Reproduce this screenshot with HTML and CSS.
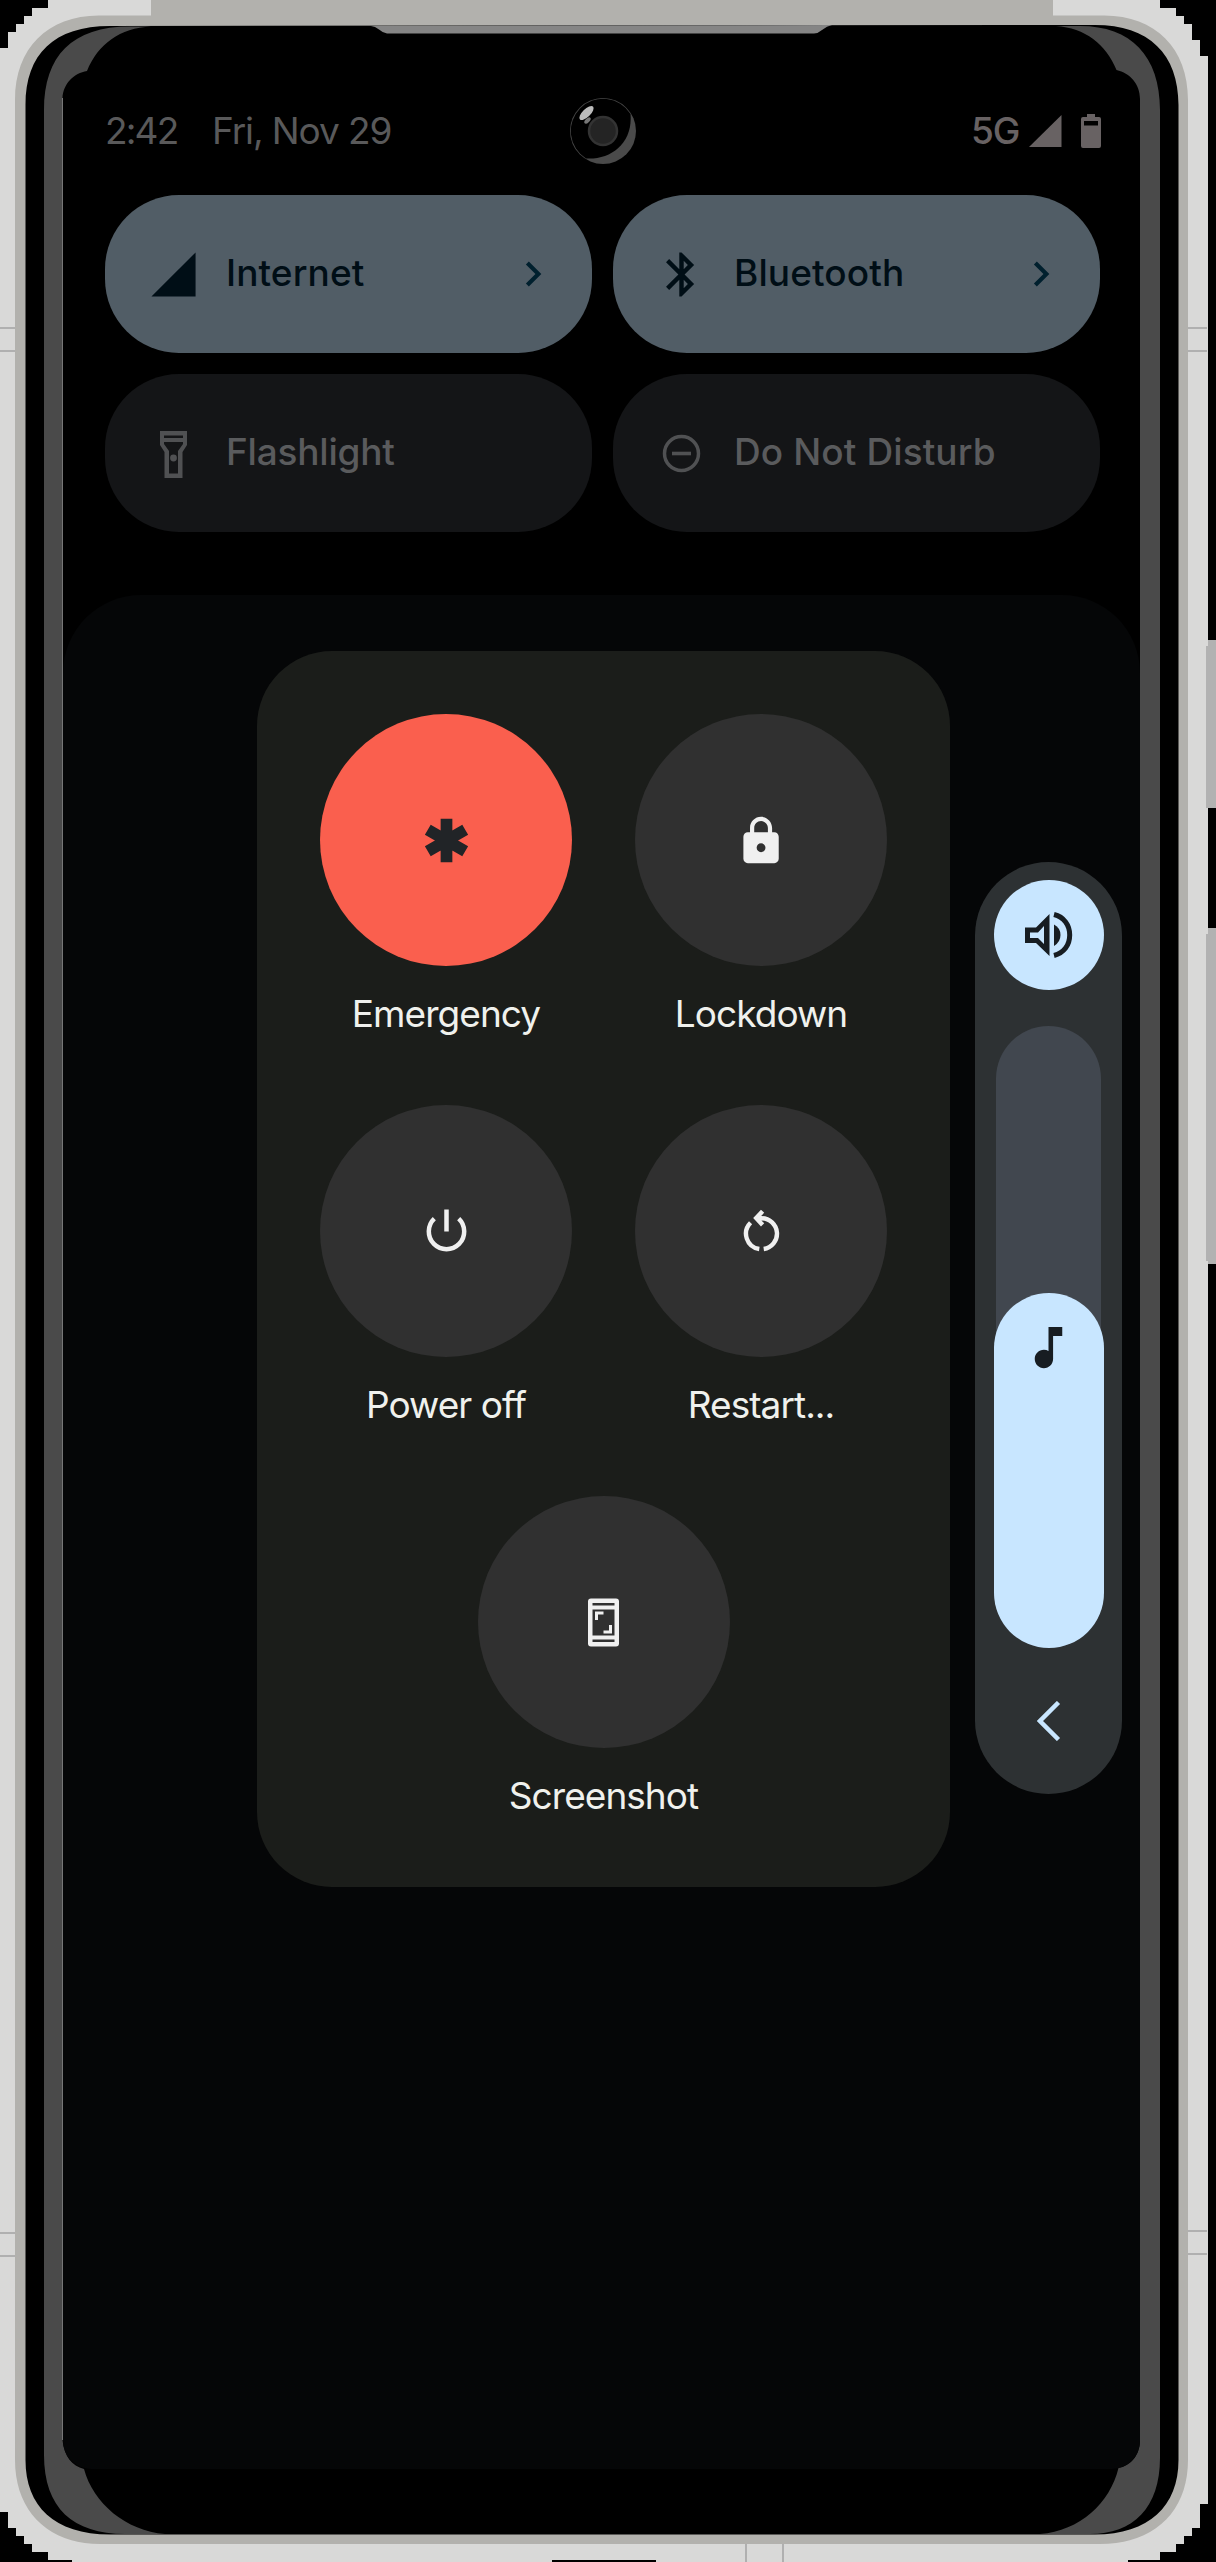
FILE: index.html
```html
<!DOCTYPE html>
<html lang="en">
<head>
<meta charset="utf-8">
<title>Power menu</title>
<link rel="stylesheet" href="styles.css">
</head>
<body>
<div class="phone">
  <svg class="frame" viewBox="0 0 1216 2562" aria-hidden="true">
    <path fill="#d9d9d8" d="M48 0H1160V8H1176V16H1184V24H1192V40H1200V56H1208V2504H1200V2528H1192V2536H1184V2544H1176V2552H1160V2560H1128V2562H656V2560H552V2562H72V2560H48V2552H32V2544H24V2536H16V2528H8V2512H0V48H8V32H16V24H24V16H32V8H48Z"/>
    <path fill="none" stroke="#b0b0b0" stroke-width="2" d="M0 328H16M0 351H16M1188 328H1207M1188 351H1207M0 2233H16M0 2256H16M1188 2231H1207M1188 2254H1207M746 2542V2562M783 2542V2562"/>
    <path fill="#b2b2b2" d="M1208 640H1216V808H1206V646H1208ZM1208 928H1216V1264H1208V1261H1206V934H1208Z"/>
    <path fill="#b2b1ad" d="M151 0H1053V30H151Z"/>
    <path fill="#b2b1ad" d="M15 100C15 48 48 15 100 15.500H1103C1155 15 1188 48 1188 100V2460C1188 2511 1155 2544 1100 2544H100C48 2544 15 2511 15 2460Z"/>
    <path fill="#000" d="M25.500 105C25.500 54 54 26 110 26L1095 25C1149 25 1178.500 54 1178.500 105V2460C1178.500 2506 1149 2534.500 1095 2534.500H110C54 2534.500 25.500 2506 25.500 2460Z"/>
    <path fill="#4a4a4a" d="M44 110C44 56 72 26.500 130 26.500H151C120 28 98 44 87 71C74 73 63 84 62.500 98V2440C64 2456 72 2466 84 2469C93 2503 126 2531 165 2534H125C73 2534 44 2508 44 2455Z"/>
    <path fill="#4a4a4a" d="M1160 110C1160 56 1131 26 1080 26H1056C1085 28 1106 44 1116.500 70C1130 73 1140 84 1140 99V2440C1140 2456 1130 2466 1118.500 2468C1110 2503 1080 2531 1040 2534H1090C1133 2534 1160 2508 1160 2458Z"/>
    <path fill="none" stroke="#777" d="M62.500 98V2440"/>
    <path fill="#858585" d="M371 26L832 25Q827 26 822 30Q818 33.500 814 33.500H387Q383 33 379 29.500Q375 26 371 26Z"/>
  </svg>

  <main class="screen">
    <header class="status">
      <span class="clock">2:42</span>
      <span class="date">Fri, Nov 29</span>
      <svg class="camera" viewBox="0 0 68 68" aria-hidden="true">
        <circle cx="34" cy="34" r="33" fill="#4a4a4a"/>
        <path fill="#000" d="M61.500 17A32.300 32.300 0 1 0 17 61.500C42 63 64 46 61.500 17Z"/>
        <circle cx="34" cy="34" r="14" fill="#242424" stroke="#333" stroke-width="2.500"/>
        <ellipse cx="17.500" cy="16" rx="9.200" ry="4" fill="#bcbcbc" transform="rotate(-45 17.500 16)"/>
        <ellipse cx="18.500" cy="23.500" rx="4" ry="2" fill="#777" transform="rotate(-45 18.500 23.500)"/>
      </svg>
      <span class="network">5G</span>
      <svg class="signal" viewBox="0 0 33 32" aria-hidden="true"><path d="M32.500 0V32H0Z"/></svg>
      <svg class="battery" viewBox="0 0 20 34" aria-hidden="true"><path fill-rule="evenodd" d="M6 0H14V3H18Q20 3 20 5V32Q20 34 18 34H2Q0 34 0 32V5Q0 3 2 3H6ZM3 7V11.500H17V7Z"/></svg>
    </header>

    <section class="tiles">
      <div class="tile on">
        <svg class="tile-icon" viewBox="0 0 24 24"><path d="M2 22h20V2z"/></svg>
        <span class="tile-name">Internet</span>
        <svg class="more" viewBox="0 0 24 24"><path d="M10 6 8.590 7.410 13.170 12l-4.580 4.590L10 18l6-6z"/></svg>
      </div>
      <div class="tile on">
        <svg class="tile-icon" viewBox="0 0 24 24"><path d="M17.710 7.710 12 2h-1v7.590L6.410 5 5 6.410 10.590 12 5 17.590 6.410 19 11 14.410V22h1l5.710-5.710-4.300-4.290 4.300-4.290zM13 5.830l1.880 1.880L13 9.590V5.830zm1.880 10.460L13 18.170v-3.760l1.880 1.880z"/></svg>
        <span class="tile-name">Bluetooth</span>
        <svg class="more" viewBox="0 0 24 24"><path d="M10 6 8.590 7.410 13.170 12l-4.580 4.590L10 18l6-6z"/></svg>
      </div>
      <div class="tile">
        <svg class="tile-icon" viewBox="0 0 53 53"><path fill-rule="evenodd" d="M13 4H40V18L35.500 25V51H17.500V25L13 18ZM17 8.500V11H36V8.500ZM17 15V17L22 24V46.500H31V24L36 17V15Z"/><circle cx="26.500" cy="31" r="3.400"/></svg>
        <span class="tile-name flashlight">Flashlight</span>
      </div>
      <div class="tile">
        <svg class="tile-icon" viewBox="0 0 53 53"><circle cx="26.500" cy="26.500" r="17" fill="none" stroke="#505153" stroke-width="3.500"/><path d="M17 24.700H36V28.300H17Z"/></svg>
        <span class="tile-name">Do Not Disturb</span>
      </div>
    </section>

    <section class="shade">
      <div class="power-menu">
        <div class="action">
          <div class="disc emergency"><svg class="glyph" viewBox="-26.500 -26.500 53 53"><path fill="none" stroke="#212427" stroke-width="11.700" d="M0-21.800V21.800M-18.700-10.800L18.700 10.800M-18.700 10.800L18.700-10.800"/></svg></div>
          <span class="name">Emergency</span>
        </div>
        <div class="action">
          <div class="disc"><svg class="glyph" viewBox="0.200 -0.300 24 24"><path d="M18 8h-1V6c0-2.760-2.240-5-5-5S7 3.240 7 6v2H6c-1.100 0-2 .9-2 2v10c0 1.100.9 2 2 2h12c1.100 0 2-.9 2-2V10c0-1.100-.9-2-2-2zm-6 9c-1.100 0-2-.9-2-2s.9-2 2-2 2 .9 2 2-.9 2-2 2zM15.100 8H8.900V6c0-1.710 1.390-3.100 3.100-3.100s3.100 1.390 3.100 3.100v2z"/></svg></div>
          <span class="name">Lockdown</span>
        </div>
        <div class="action">
          <div class="disc"><svg class="glyph" viewBox="-26.500 -26.500 53 53"><path fill="none" stroke="#f0f0f0" stroke-width="4.500" d="M0-22V0M-12.200-12.800A17.700 17.700 0 1 0 12.200-12.800"/></svg></div>
          <span class="name">Power off</span>
        </div>
        <div class="action">
          <div class="disc"><svg class="glyph" viewBox="0 0 24 24"><path fill="none" stroke="#f0f0f0" stroke-width="2" d="M12.500 2.800 9.600 5.900 12.500 9M9.800 6H12A7 7 0 0 1 13 19.930M11 19.930A7 7 0 0 1 7.050 8.050"/></svg></div>
          <span class="name">Restart...</span>
        </div>
        <div class="action wide">
          <div class="disc"><svg class="glyph" viewBox="0 0 53 53"><path fill-rule="evenodd" d="M14 2.500H39Q42 2.500 42 5.500V47.500Q42 50.500 39 50.500H14Q11 50.500 11 47.500V5.500Q11 2.500 14 2.500ZM15.500 7V9.500H37.500V7ZM15.500 13.500V39.500H37.500V13.500ZM15.500 43.500V46H37.500V43.500Z"/><path fill="none" stroke="#f0f0f0" stroke-width="3" d="M19.500 24V17H26.500M33.500 29V36H26.500"/></svg></div>
          <span class="name">Screenshot</span>
        </div>
      </div>

      <aside class="volume">
        <div class="ringer">
          <svg class="speaker" viewBox="0 0 48 46"><path fill-rule="evenodd" d="M0 15.500H11L24.500 2V44L11 31H0ZM5 20.500V26H13L19 32V14L13 20.500Z"/><path d="M29 12.500Q35.500 16 35.500 23T29 34Z"/><path fill="none" stroke="#171d22" stroke-width="5" d="M29 2.500C39 5 44.700 13 44.700 23S39 41 29 43.500"/></svg>
        </div>
        <div class="track">
          <div class="level"><svg class="note" viewBox="0 0 24 24"><path d="M12 3v10.550c-.59-.34-1.270-.55-2-.55-2.210 0-4 1.790-4 4s1.790 4 4 4 4-1.790 4-4V7h4V3h-6z"/></svg></div>
        </div>
        <svg class="expand" viewBox="0 0 24 40"><path d="M21.500 1.500 3 20 21.500 38.500"/></svg>
      </aside>
    </section>
  </main>
</div>
</body>
</html>
```

FILE: styles.css
```css
* { box-sizing: border-box; }

body {
  margin: 0;
  background: #000;
  font-family: Inter, "Liberation Sans", sans-serif;
  font-size: 37px;
  line-height: 44px;
}

svg { display: block; flex: none; }

.phone {
  position: relative;
  width: 1216px;
  height: 2562px;
  padding: 71px 76px 0 63px;
}

/* Device body drawn behind the screen */
.frame {
  position: absolute;
  inset: 0;
  width: 1216px;
  height: 2562px;
}

.screen {
  position: relative;
  width: 1077px;
  height: 2398px;
}

.status {
  display: flex;
  align-items: center;
  height: 124px;
  padding: 0 38px 4px 42px;
  color: #59595a;
  white-space: nowrap;
}

.clock { width: 107px; letter-spacing: -1.8px; }
.date { width: 357px; letter-spacing: -1.1px; }
.camera { width: 68px; height: 68px; margin-right: 334px; }
.network { width: 58px; color: #686263; font-weight: 500; letter-spacing: -1px; }
.signal { width: 33px; height: 32px; fill: #686263; }
.battery { width: 20px; height: 34px; margin-left: 19px; fill: #686263; }

.tiles {
  display: grid;
  grid-template-columns: 487px 487px;
  grid-auto-rows: 158px;
  gap: 21px;
  padding: 0 42px;
}

.tile {
  display: flex;
  align-items: center;
  padding: 0 34px 0 42px;
  border-radius: 74px;
  background: #141517;
  color: #5a5b5d;
  fill: #505153;
  font-weight: 500;
}

.tile.on {
  background: #515d66;
  color: #000e16;
  fill: #000e16;
}

.tile-icon { width: 53px; height: 53px; margin-right: 26px; }
.tile-name { flex: 1; padding-bottom: 2px; white-space: nowrap; letter-spacing: 0.1px; }
.tile-name.flashlight { letter-spacing: -0.2px; }
.more { width: 50px; height: 50px; fill: #00202e; }

.shade {
  display: flex;
  justify-content: space-between;
  align-items: flex-start;
  height: 1874px;
  margin-top: 63px;
  padding: 56px 18px 0 194px;
  border-radius: 78px 78px 28px 28px;
  background: #050607;
}

.power-menu {
  display: grid;
  grid-template-columns: 252px 252px;
  gap: 69px 63px;
  width: 693px;
  height: 1236px;
  padding: 63px 63px 69px;
  border-radius: 75px;
  background: #1b1d1a;
}

.action {
  display: flex;
  flex-direction: column;
  align-items: center;
  gap: 26px;
  height: 322px;
}

.action.wide { grid-column: 1 / 3; }

.disc {
  display: flex;
  align-items: center;
  justify-content: center;
  width: 252px;
  height: 252px;
  border-radius: 50%;
  background: #303030;
}

.disc.emergency { background: #fa5f4e; }
.glyph { width: 53px; height: 53px; fill: #f0f0f0; }
.name { color: #f0f1ed; white-space: nowrap; letter-spacing: -0.95px; }

.volume {
  display: flex;
  flex-direction: column;
  align-items: center;
  width: 147px;
  height: 932px;
  margin-top: 211px;
  padding-top: 18px;
  border-radius: 74px;
  background: #2d3133;
}

.ringer {
  display: flex;
  align-items: center;
  justify-content: center;
  width: 110px;
  height: 110px;
  border-radius: 50%;
  background: #c8e6ff;
}

.speaker { width: 48px; height: 46px; fill: #171d22; }

.track {
  display: flex;
  flex-direction: column;
  justify-content: flex-end;
  align-items: center;
  width: 105px;
  height: 622px;
  margin-top: 36px;
  border-radius: 53px;
  background: #41474f;
}

.level {
  display: flex;
  justify-content: center;
  width: 110px;
  height: 355px;
  padding-top: 27px;
  border-radius: 55px;
  background: #c8e6ff;
}

.note { width: 55px; height: 55px; fill: #171d22; }

.expand {
  width: 24px;
  height: 40px;
  margin-top: 53px;
  fill: none;
  stroke: #c8e6ff;
  stroke-width: 4.5;
}
```
